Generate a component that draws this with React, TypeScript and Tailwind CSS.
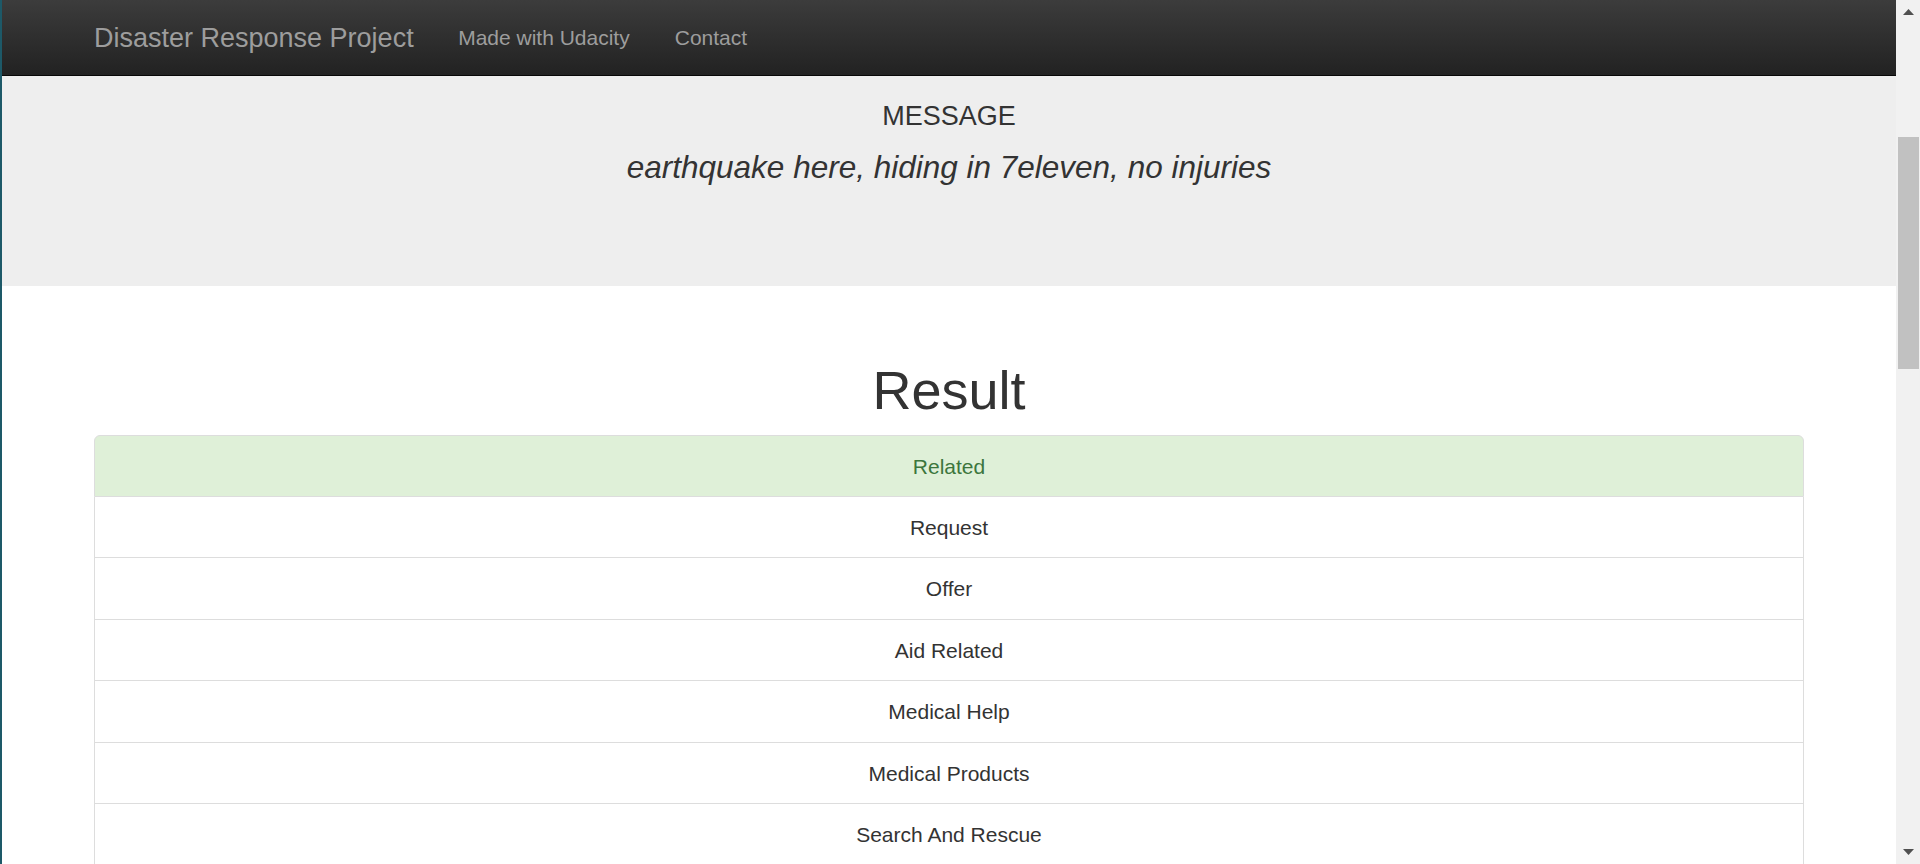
const categories = [
  { name: "Related", hit: true },
  { name: "Request", hit: false },
  { name: "Offer", hit: false },
  { name: "Aid Related", hit: false },
  { name: "Medical Help", hit: false },
  { name: "Medical Products", hit: false },
  { name: "Search And Rescue", hit: false },
  { name: "Security", hit: false },
  { name: "Military", hit: false },
];

const Navbar = () => (
  <nav className="h-[76px] shrink-0 border-b border-[#080808] bg-gradient-to-b from-[#3c3c3c] to-[#222222]">
    <div className="mx-auto flex h-[75px] w-[1710px] items-center">
      <a href="#" className="pr-[22px] text-[27px] leading-[30px] text-[#9d9d9d]">
        Disaster Response Project
      </a>
      <a href="#" className="px-[22.5px] text-[21px] leading-[30px] text-[#9d9d9d]">
        Made with Udacity
      </a>
      <a href="#" className="px-[22.5px] text-[21px] leading-[30px] text-[#9d9d9d]">
        Contact
      </a>
    </div>
  </nav>
);

const Scrollbar = () => (
  <div className="flex h-[864px] w-[24px] shrink-0 flex-col bg-[#f1f1f1]">
    <div className="flex h-[24px] items-center justify-center">
      <svg width="11" height="6" viewBox="0 0 11 6">
        <polygon points="5.5,0 11,6 0,6" fill="#505050" />
      </svg>
    </div>
    <div className="ml-[2px] mt-[113px] h-[232px] w-[21px] bg-[#c1c1c1]" />
    <div className="flex-1" />
    <div className="flex h-[24px] items-center justify-center">
      <svg width="11" height="6" viewBox="0 0 11 6">
        <polygon points="0,0 11,0 5.5,6" fill="#505050" />
      </svg>
    </div>
  </div>
);

export default function App() {
  return (
    <div
      className="flex h-[864px] w-[1920px] overflow-hidden bg-white text-[#333333]"
      style={{ fontFamily: '"Liberation Sans", Arial, sans-serif' }}
    >
      <div className="w-[2px] shrink-0 bg-[#1d5968]" />
      <div className="flex min-w-0 flex-1 flex-col">
        <Navbar />
        <div className="flex h-[210px] shrink-0 flex-col items-center bg-[#eeeeee] pt-[25px]">
          <h4 className="text-[27px] leading-[30px]">MESSAGE</h4>
          <p className="mt-[14px] text-[31.5px] italic leading-[45px]">
            earthquake here, hiding in 7eleven, no injuries
          </p>
        </div>
        <div className="mx-auto w-[1710px]">
          <h1 className="mb-[15px] mt-[74px] text-center text-[54px] leading-[60px]">Result</h1>
          <ul className="flex flex-col">
            {categories.map((c, i) => (
              <li
                key={c.name}
                className={`flex h-[61.5px] shrink-0 items-center justify-center border-x border-b border-[#dddddd] pt-[1px] text-[21px] ${
                  i === 0 ? "rounded-t-[6px] border-t" : ""
                } ${c.hit ? "bg-[#dff0d8] text-[#3c763d]" : "bg-white text-[#333333]"}`}
              >
                {c.name}
              </li>
            ))}
          </ul>
        </div>
      </div>
      <Scrollbar />
    </div>
  );
}
